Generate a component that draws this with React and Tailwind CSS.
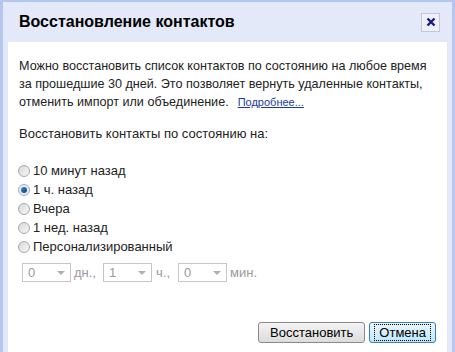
import React, { useState } from "react";

const Radio = ({ checked, label, onClick }) => (
  <label className="flex items-center h-[19px] cursor-pointer" onClick={onClick}>
    <span
      className={`w-[12px] h-[12px] rounded-full border border-[#a9a9a9] flex items-center justify-center mr-[3px] ${
        checked ? "bg-[#e8eef5]" : "bg-gradient-to-br from-[#d8d8d8] to-[#f8f8f8]"
      }`}
    >
      {checked && <span className="w-[6px] h-[6px] rounded-full bg-gradient-to-br from-[#3b8ad0] to-[#0c3f7a]" />}
    </span>
    <span>{label}</span>
  </label>
);

const Select = ({ value }) => (
  <div className="w-[49px] h-[19px] border border-[#c6c6c6] bg-white flex items-center justify-between pl-[5px] pr-[5px] text-[#9a9a9a]">
    <span>{value}</span>
    <span className="w-0 h-0 border-l-[4px] border-r-[4px] border-t-[4px] border-l-transparent border-r-transparent border-t-[#b0b0b0]" />
  </div>
);

const App = () => {
  const [choice, setChoice] = useState(1);
  const options = ["10 минут назад", "1 ч. назад", "Вчера", "1 нед. назад", "Персонализированный"];

  return (
    <div
      className="w-[455px] h-[352px] overflow-hidden bg-[#e3e9f9] border-t-2 border-l-[3px] border-r-[3px] border-[#b4c7ef] flex flex-col text-[13px] text-[#222]"
      style={{ fontFamily: '"Liberation Sans", Arial, sans-serif' }}
    >
      <div className="h-[40px] flex items-center justify-between pl-[16px] pr-[12px]">
        <h2 className="text-[16px] font-bold text-black">Восстановление контактов</h2>
        <button className="w-[19px] h-[19px] border border-[#c3c8d8] bg-[#eef1fb] flex items-center justify-center">
          <svg width="10" height="10" viewBox="0 0 10 10">
            <path d="M1.5 1.5 L8.5 8.5 M8.5 1.5 L1.5 8.5" stroke="#1a1a8c" strokeWidth="2.4" />
          </svg>
        </button>
      </div>
      <div className="flex-1 bg-white mx-[5px] pl-[11px] pr-[4px] pt-[15px] flex flex-col leading-[18px]">
        <p className="whitespace-nowrap text-[12.6px]">
          Можно восстановить список контактов по состоянию на любое время
          <br />
          за прошедшие 30 дней. Это позволяет вернуть удаленные контакты,
          <br />
          отменить импорт или объединение.
          <a href="#" className="ml-[9px] text-[11px] text-[#1a3a9c] underline">
            Подробнее...
          </a>
        </p>
        <p className="mt-[14px]">Восстановить контакты по состоянию на:</p>
        <div className="mt-[18px] flex flex-col -ml-[1px]">
          {options.map((o, i) => (
            <Radio key={o} label={o} checked={choice === i} onClick={() => setChoice(i)} />
          ))}
        </div>
        <div className="mt-[7px] flex items-center pl-[3px] text-[#9a9a9a]">
          <Select value="0" />
          <span className="ml-[3px] mr-[7px]">дн.,</span>
          <Select value="1" />
          <span className="ml-[4px] mr-[8px]">ч.,</span>
          <Select value="0" />
          <span className="ml-[3px]">мин.</span>
        </div>
        <div className="mt-[40px] flex justify-end gap-[4px] pr-[7px]">
          <button className="h-[21px] px-[11px] border border-[#8a8a8a] rounded-[3px] bg-gradient-to-b from-[#f4f4f4] to-[#dcdcdc] text-black">
            Восстановить
          </button>
          <button className="h-[21px] px-[4px] border border-[#3c7fb1] rounded-[3px] bg-gradient-to-b from-[#eaf6fd] to-[#bee6fd] text-black">
            <span className="px-[4px] border border-dotted border-black">Отмена</span>
          </button>
        </div>
      </div>
    </div>
  );
};

export default App;
